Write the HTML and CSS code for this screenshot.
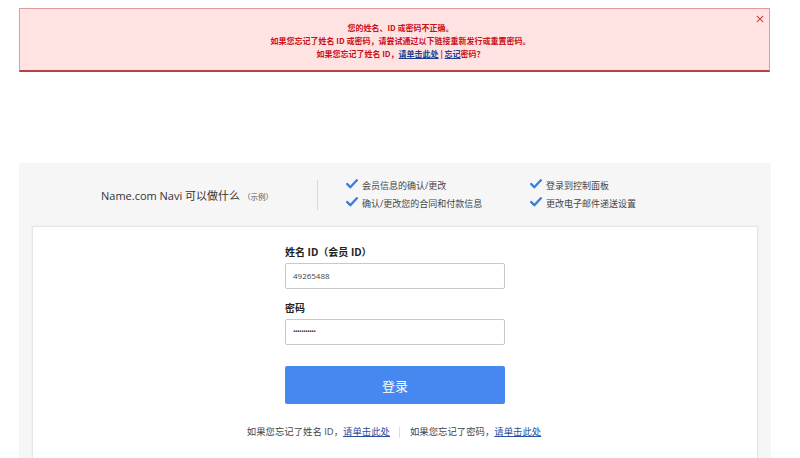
FILE: index.html
```html
<!DOCTYPE html>
<html lang="zh">
<head>
<meta charset="utf-8">
<link rel="stylesheet" href="styles.css">
</head>
<body>
<div class="alert">
  <p>您的姓名、ID 或密码不正确。</p>
  <p>如果您忘记了姓名 ID 或密码，请尝试通过以下链接重新发行或重置密码。</p>
  <p>如果您忘记了姓名 ID，<a href="#">请单击此处</a> | <a href="#">忘记</a>密码？</p>
  <svg class="close" viewBox="0 0 10 10"><path d="M1 1 L9 9 M9 1 L1 9" stroke="#d93636" stroke-width="1.3" fill="none"/></svg>
</div>

<section class="panel">
  <div class="head">
    <div class="title">Name.com Navi 可以做什么 <small>（示例）</small></div>
    <div class="divider"></div>
    <ul class="checks">
      <li><svg viewBox="0 0 12 10"><path d="M1.2 5 L4.3 8.2 L10.8 1.3" fill="none" stroke="#3b7ddb" stroke-width="2.4" stroke-linecap="round" stroke-linejoin="round"/></svg>会员信息的确认/更改</li>
      <li><svg viewBox="0 0 12 10"><path d="M1.2 5 L4.3 8.2 L10.8 1.3" fill="none" stroke="#3b7ddb" stroke-width="2.4" stroke-linecap="round" stroke-linejoin="round"/></svg>登录到控制面板</li>
      <li><svg viewBox="0 0 12 10"><path d="M1.2 5 L4.3 8.2 L10.8 1.3" fill="none" stroke="#3b7ddb" stroke-width="2.4" stroke-linecap="round" stroke-linejoin="round"/></svg>确认/更改您的合同和付款信息</li>
      <li><svg viewBox="0 0 12 10"><path d="M1.2 5 L4.3 8.2 L10.8 1.3" fill="none" stroke="#3b7ddb" stroke-width="2.4" stroke-linecap="round" stroke-linejoin="round"/></svg>更改电子邮件递送设置</li>
    </ul>
  </div>
  <div class="card">
    <form class="form">
      <label class="label">姓名 ID（会员 ID）</label>
      <div class="input">49265488</div>
      <label class="label">密码</label>
      <div class="input pw">•••••••••••</div>
      <button type="button" class="btn">登录</button>
    </form>
    <p class="foot">如果您忘记了姓名 ID，<a href="#">请单击此处</a><span class="sep"></span>如果您忘记了密码，<a href="#">请单击此处</a></p>
  </div>
</section>
</body>
</html>
```

FILE: styles.css
```css
html, body {
  margin: 0;
  padding: 0;
  background: #fff;
}
body {
  width: 800px;
  height: 458px;
  overflow: hidden;
  font-family: "Open Sans", "Noto Sans CJK SC", sans-serif;
  color: #333;
}
.alert {
  position: relative;
  box-sizing: border-box;
  margin: 8px 0 0 19px;
  width: 751px;
  height: 64px;
  background: #ffe3e3;
  border: 1px solid #e09a9a;
  border-bottom: 2px solid #b5433f;
  padding: 12px 0 0 12px;
  text-align: center;
  color: #cc1016;
  font-family: "Noto Sans CJK SC", sans-serif;
  font-weight: bold;
  font-size: 8px;
  line-height: 13px;
}
.alert p {
  margin: 0;
}
.alert a {
  color: #1c3f8f;
  text-decoration: underline;
}
.close {
  position: absolute;
  right: 5px;
  top: 6px;
  width: 8px;
  height: 8px;
}
.panel {
  margin: 91px 0 0 19px;
  width: 752px;
  background: #f6f6f6;
  padding-bottom: 10px;
}
.head {
  display: flex;
  align-items: center;
  height: 63px;
  padding-left: 82px;
  box-sizing: border-box;
}
.title {
  width: 216px;
  font-size: 11px;
  color: #333;
  white-space: nowrap;
}
.title small {
  font-size: 7.5px;
  color: #555;
}
.divider {
  width: 1px;
  height: 30px;
  background: #d8d8d8;
  margin-right: 28px;
}
.checks {
  list-style: none;
  margin: 0;
  padding: 0;
  display: grid;
  grid-template-columns: 184px 140px;
  row-gap: 3px;
  font-size: 9px;
  color: #444;
  line-height: 15px;
}
.checks li {
  display: flex;
  align-items: center;
  white-space: nowrap;
}
.checks svg {
  width: 12px;
  height: 10px;
  margin-right: 4px;
  margin-top: -4px;
}
.card {
  margin: 0 13px;
  background: #fff;
  border: 1px solid #e6e6e6;
  box-shadow: 0 0 2px rgba(0,0,0,0.08);
  height: 240px;
  box-sizing: border-box;
  padding-top: 18px;
}
.form {
  width: 220px;
  margin: 0 auto;
  display: flex;
  flex-direction: column;
}
.label {
  font-size: 10px;
  font-weight: bold;
  color: #222;
  line-height: 14px;
  margin-bottom: 4px;
}
.input {
  box-sizing: border-box;
  height: 26px;
  border: 1px solid #c9c9c9;
  border-radius: 2px;
  font-size: 8px;
  line-height: 24px;
  padding-left: 7px;
  color: #444;
  margin-bottom: 12px;
}
.input.pw {
  font-size: 7px;
  letter-spacing: -0.6px;
  margin-bottom: 21px;
}
.btn {
  height: 38px;
  border: none;
  border-radius: 2px;
  background: #4787f0;
  color: #fff;
  font-size: 13px;
  font-family: "Noto Sans CJK SC", sans-serif;
  padding: 0;
}
.foot {
  margin: 20px 0 0;
  text-align: center;
  font-size: 9.4px;
  color: #444;
  padding-right: 2px;
}
.foot a {
  color: #2a4f9c;
  text-decoration: underline;
}
.sep {
  display: inline-block;
  width: 1px;
  height: 11px;
  background: #ddd;
  vertical-align: middle;
  margin: 0 10px 0 9px;
}
```
